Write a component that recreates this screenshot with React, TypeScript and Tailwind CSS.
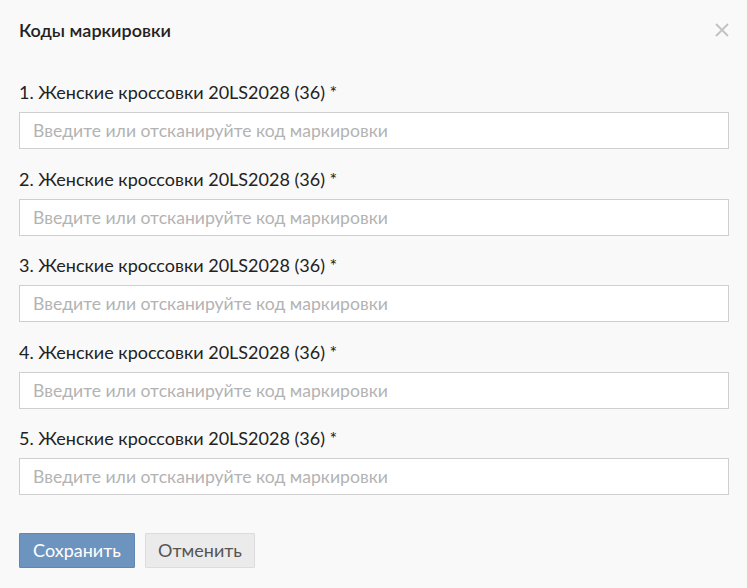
import React from "react";

const items = [1, 2, 3, 4, 5];

export default function App() {
  return (
    <div
      className="w-[747px] h-[588px] bg-[#f9f9f9] text-[#222] pl-[19px] pr-[18px] relative"
      style={{ fontFamily: "Lato, 'Noto Sans', sans-serif" }}
    >
      <div className="h-[59px] flex items-center justify-between">
        <div className="text-[18px] font-semibold leading-[20px] text-[#222]">Коды маркировки</div>
        <svg width="14" height="14" viewBox="0 0 14 14" className="mr-[0px] mt-[1px]">
          <path d="M1 1L13 13M13 1L1 13" stroke="#c2c2c2" strokeWidth="1.8" />
        </svg>
      </div>
      <div className="flex flex-col gap-[20.5px] pt-[24px]">
        {items.map((n) => (
          <div key={n} className="flex flex-col">
            <label className="text-[18px] leading-[18px] mb-[11px] text-[#222]">
              {n}. Женские кроссовки 20LS2028 (36) *
            </label>
            <input
              className="h-[37px] w-full bg-white border border-[#cfcfcf] px-[13px] text-[17.6px] placeholder:text-[#b3b3b3] outline-none"
              placeholder="Введите или отсканируйте код маркировки"
            />
          </div>
        ))}
      </div>
      <div className="flex gap-[10px] mt-[38px]">
        <button className="w-[116px] h-[35px] bg-[#6d93bf] border border-[#5f86b4] text-white text-[18px] rounded-[1px]">
          Сохранить
        </button>
        <button className="w-[110px] h-[35px] bg-[#ebebeb] border border-[#dcdcdc] text-[#555] text-[18px] rounded-[1px]">
          Отменить
        </button>
      </div>
    </div>
  );
}
